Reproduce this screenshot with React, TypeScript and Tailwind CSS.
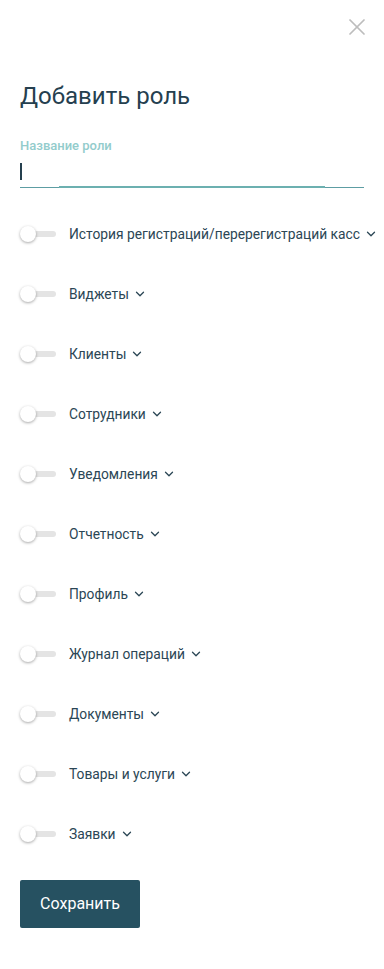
import { X, ChevronDown } from 'lucide-react'

const sections = [
  'История регистраций/перерегистраций касс',
  'Виджеты',
  'Клиенты',
  'Сотрудники',
  'Уведомления',
  'Отчетность',
  'Профиль',
  'Журнал операций',
  'Документы',
  'Товары и услуги',
  'Заявки',
]

function Toggle() {
  return (
    <div className="relative w-[36px] h-[16px] shrink-0">
      <div className="absolute left-[4px] right-0 top-[5px] h-[6px] rounded-full bg-[#e4e4e4]" />
      <div className="absolute left-0 top-0 w-[16px] h-[16px] rounded-full bg-white shadow-[0_1px_3px_rgba(0,0,0,0.35)]" />
    </div>
  )
}

export default function App() {
  return (
    <div className="w-[384px] min-h-[969px] bg-white font-['Roboto',sans-serif] relative">
      <button className="absolute right-[13px] top-[13px] text-[#bdbdbd]">
        <X className="w-[28px] h-[28px]" strokeWidth={1.5} />
      </button>

      <div className="px-[20px] pt-[80px]">
        <h1 className="text-[24px] leading-[32px] text-[#25404f]">Добавить роль</h1>

        <div className="mt-[26px]">
          <label className="block text-[13px] font-medium text-[#93cccc] leading-[16px]">
            Название роли
          </label>
          <div className="relative mt-[6px] h-[28px] border-b border-[#5d9da3]">
            <div className="absolute left-0 top-[3px] w-[2px] h-[17px] bg-[#25404f]" />
            <div className="absolute left-[39px] w-[266px] -bottom-[1px] h-[2px] bg-[#6cb0b0]" />
          </div>
        </div>

        <div className="mt-[38px] flex flex-col gap-[44px]">
          {sections.map((s) => (
            <div key={s} className="flex items-center h-[16px]">
              <Toggle />
              <span className="ml-[13px] text-[13.8px] text-[#2b4655] whitespace-nowrap">{s}</span>
              <ChevronDown className="ml-[4px] w-[14px] h-[14px] shrink-0 text-[#2b4655]" strokeWidth={2.2} />
            </div>
          ))}
        </div>

        <button className="mt-[38px] w-[120px] h-[48px] rounded-[2px] bg-[#265161] text-white text-[16px]">
          Сохранить
        </button>
      </div>
    </div>
  )
}
